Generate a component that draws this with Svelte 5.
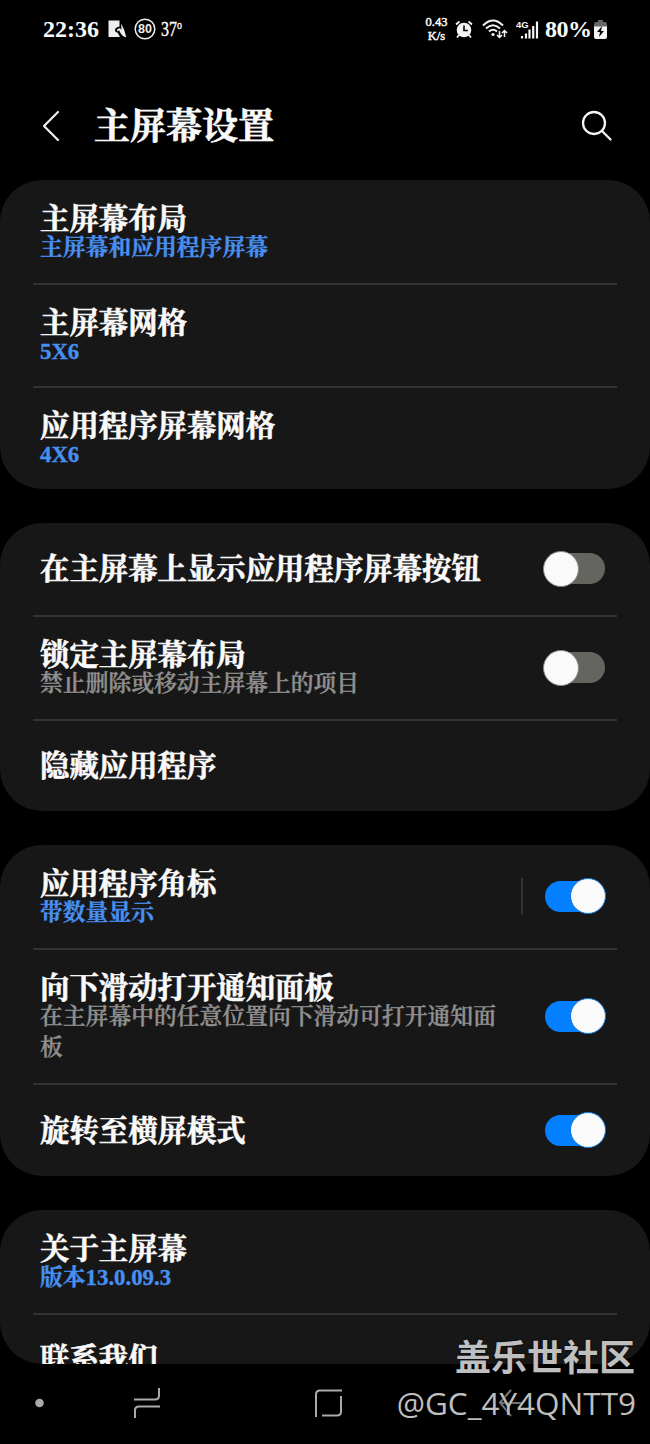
<script>
  const groups = [
    [
      { title: '主屏幕布局', sub: '主屏幕和应用程序屏幕', accent: true, h: 105 },
      { title: '主屏幕网格', sub: '5X6', accent: true, h: 103 },
      { title: '应用程序屏幕网格', sub: '4X6', accent: true, h: 101 }
    ],
    [
      { title: '在主屏幕上显示应用程序屏幕按钮', toggle: 'off', h: 94 },
      { title: '锁定主屏幕布局', sub: '禁止删除或移动主屏幕上的项目', toggle: 'off', h: 104 },
      { title: '隐藏应用程序', h: 90 }
    ],
    [
      { title: '应用程序角标', sub: '带数量显示', accent: true, toggle: 'on', split: true, h: 105 },
      { title: '向下滑动打开通知面板', sub: '在主屏幕中的任意位置向下滑动可打开通知面板', toggle: 'on', h: 135 },
      { title: '旋转至横屏模式', toggle: 'on', h: 91 }
    ],
    [
      { title: '关于主屏幕', sub: '版本13.0.09.3', accent: true, h: 105 },
      { title: '联系我们', h: 88 }
    ]
  ];
</script>

<div class="screen">
  <div class="status">
    <span class="clock">22:36</span>
    <svg class="app" width="19" height="18" viewBox="0 0 19 18">
      <path d="M.5.500H11.500V6.500Q7 7.500 7 10t2.500 2.500L12 17H.5z" fill="#eee" />
      <path d="M13 3.500Q16.500 9 18.300 17.200Q14 16.500 12.500 13Q11.500 10 10.500 10.500L9.300 11.500Q8.300 9.500 10 8.700Q12.500 7.500 13.500 10z" fill="#eee" />
    </svg>
    <svg class="ring" width="22" height="22" viewBox="0 0 22 22">
      <circle cx="11" cy="11" r="9.8" fill="none" stroke="#eee" stroke-width="1.5" />
      <text x="11" y="15.200" text-anchor="middle" class="ringnum">80</text>
    </svg>
    <span class="temp">37<small>o</small></span>
    <span class="spacer"></span>
    <span class="speed"><span>0.43</span><span>K/s</span></span>
    <svg class="alarm" width="18" height="19" viewBox="0 0 18 19">
      <circle cx="9" cy="10" r="7.3" fill="#f4f4f4" />
      <path d="M1 4.5L4.5 1.5M17 4.5L13.5 1.5M4 15l-2 2.5M14 15l2 2.5" stroke="#f4f4f4" stroke-width="1.8" />
      <path d="M9 5.5v5h3.8" fill="none" stroke="#000" stroke-width="1.6" />
    </svg>
    <svg class="wifi" width="26" height="20" viewBox="0 0 26 20">
      <g fill="none" stroke="#f4f4f4" stroke-width="1.900">
        <path d="M1 6.500Q11-3.500 21 6.500M4 9.500q7-6.500 14 0M7 12.500q4-3.500 8 0" />
      </g>
      <circle cx="11" cy="15.500" r="1.600" fill="#f4f4f4" />
      <path d="M17.500 12v6.500M15 16l2.500 2.500L20 16M22.500 18v-6.500M20 14l2.500-2.500L25 14" fill="none" stroke="#f4f4f4" stroke-width="1.500" />
    </svg>
    <svg class="signal" width="23" height="20" viewBox="0 0 23 20">
      <text x="0" y="8.500" class="net">4G</text>
      <path d="M6 17v2.500M10 14.500v5M13.500 10.500v9M17.200 7v12.500M21 2.500v17" stroke="#f4f4f4" stroke-width="2.200" />
    </svg>
    <span class="pct">80%</span>
    <svg class="battery" width="13" height="19" viewBox="0 0 13 19">
      <path d="M4 0h5v2h2q2 0 2 2v3H0V4q0-2 2-2h2z" fill="#666" />
      <path d="M0 6.500h13V17q0 2-2 2H2q-2 0-2-2z" fill="#f4f4f4" />
      <path d="M8 6L3 12h3l-1 5 5-6H7z" fill="#000" />
    </svg>
  </div>

  <header>
    <svg class="back" width="20" height="32" viewBox="0 0 20 32">
      <path d="M17 2L3 16l14 14" fill="none" stroke="#f2f2f2" stroke-width="2.200" stroke-linecap="round" stroke-linejoin="round" />
    </svg>
    <h1>主屏幕设置</h1>
    <svg class="search" width="32" height="32" viewBox="0 0 32 32">
      <circle cx="13" cy="13" r="11" fill="none" stroke="#f6f6f6" stroke-width="2.300" />
      <path d="M21 21l8.500 8.500" stroke="#f6f6f6" stroke-width="2.300" stroke-linecap="round" />
    </svg>
  </header>

  <main>
    {#each groups as rows}
      <section>
        {#each rows as row}
          <div class="row" class:single={!row.sub} style:height="{row.h}px">
            <div class="copy">
              <div class="title">{row.title}</div>
              {#if row.sub}<div class="sub" class:accent={row.accent}>{row.sub}</div>{/if}
            </div>
            {#if row.split}<i class="bar"></i>{/if}
            {#if row.toggle}<div class="toggle {row.toggle}"><i></i></div>{/if}
          </div>
        {/each}
      </section>
    {/each}
  </main>

  <nav>
    <svg width="650" height="80" viewBox="0 0 650 80">
      <circle cx="39.500" cy="39" r="4.300" fill="#aaa" />
      <g fill="none" stroke="#aaa" stroke-width="2">
        <path d="M134 35.500h21q4 0 4-4V24M160 42.500h-21q-4 0-4 4V54" />
        <path d="M342 26.500h-22q-4 0-4 4V53M322 51.500h15q4 0 4-4V32" />
        <path d="M511 26L500 38.500 511 52M500 39h22" stroke="#777" />
      </g>
    </svg>
  </nav>

  <div class="mark">
    <strong>盖乐世社区</strong>
    <span>@GC_4Y4QNTT9</span>
  </div>
</div>

<style>
  :global(body) { background: #000; }
  .screen {
    position: relative;
    width: 650px;
    height: 1444px;
    display: flex;
    flex-direction: column;
    overflow: hidden;
    background: #000;
    color: #fafafa;
    font-family: 'Liberation Serif', 'Noto Serif CJK SC', 'Noto Sans CJK SC', serif;
  }
  svg { display: block; flex: none; }
  .status {
    box-sizing: border-box;
    height: 58px;
    flex: none;
    display: flex;
    align-items: center;
    padding: 0 43px;
    white-space: nowrap;
  }
  .clock { width: 65px; font-size: 24px; font-weight: 700; }
  .ring { margin-left: 7px; }
  .ringnum { font: 700 12.500px 'Liberation Sans', sans-serif; fill: #eee; }
  .temp { margin-left: 5px; font-size: 21px; line-height: 24px; transform: scaleX(.76); transform-origin: left; -webkit-text-stroke: .4px; }
  .temp small { font-size: 13px; line-height: 0; vertical-align: 7px; }
  .spacer { flex: 1; }
  .speed { display: flex; flex-direction: column; align-items: center; width: 23px; margin-right: 7px; font-size: 12.500px; line-height: 14px; -webkit-text-stroke: .45px; }
  .wifi { margin-left: 9px; }
  .signal { margin-left: 8px; }
  .net { font: 700 9.500px 'Liberation Sans', sans-serif; fill: #f4f4f4; }
  .pct { width: 45px; margin-left: 6px; margin-right: 4px; font-size: 24px; font-weight: 700; letter-spacing: -.5px; }
  header {
    height: 122px;
    box-sizing: border-box;
    flex: none;
    display: flex;
    align-items: center;
    padding: 0 37px 14px 41px;
  }
  .back { margin-top: 28px; }
  h1 { margin: 29px 0 0 33px; flex: 1; font-size: 36px; line-height: 44px; font-weight: 700; -webkit-text-stroke: .7px; }
  .search { margin-top: 28px; }
  main {
    height: 1184px;
    flex: none;
    display: flex;
    flex-direction: column;
    gap: 34px;
    overflow: hidden;
  }
  section { flex: none; border-radius: 42px; background: #171717; overflow: hidden; }
  section:last-child { height: 154px; }
  .row {
    box-sizing: border-box;
    margin: 0 33px;
    padding: 0 12px 0 7px;
    display: flex;
    align-items: center;
    border-bottom: 2px solid #333;
  }
  .row:last-child { border-bottom: 0; }
  .copy { flex: 1; min-width: 0; padding-right: 41px; padding-top: 5px; }
  .single .copy { padding: 0; }
  .title { font-size: 29.400px; line-height: 26px; font-weight: 700; white-space: nowrap; -webkit-text-stroke: .6px; }
  .sub { font-size: 22.800px; line-height: 31px; font-weight: 600; color: #8f8f8f; -webkit-text-stroke: .35px; }
  .accent { color: #478ff0; font-weight: 700; }
  .bar { width: 2px; height: 37px; margin-right: 20px; background: #333; }
  .toggle { width: 62px; height: 38px; margin-top: -1px; flex: none; display: flex; align-items: center; }
  .toggle::before { content: ''; width: 60px; height: 31px; margin-left: 2px; border-radius: 16px; background: #64655f; flex: none; }
  .toggle i { flex: none; width: 34px; height: 34px; margin-left: -62px; border: 1.500px solid #888; border-radius: 50%; background: #fafafa; }
  .on::before { background: #0280ff; }
  .on i { margin-left: -35px; border-color: #0c78dc; }
  nav { height: 80px; }
  .mark {
    position: absolute;
    right: 15px;
    top: 1332px;
    display: flex;
    flex-direction: column;
    align-items: flex-end;
    color: #bfbfbf;
    font-family: 'Noto Sans CJK SC', sans-serif;
    text-shadow: 0 0 2px #000;
  }
  .mark strong { font-size: 36px; line-height: 46px; font-weight: 700; }
  .mark span { font: 31.500px/46px 'Open Sans', sans-serif; margin-top: 2px; margin-right: -1px; white-space: nowrap; }
</style>
